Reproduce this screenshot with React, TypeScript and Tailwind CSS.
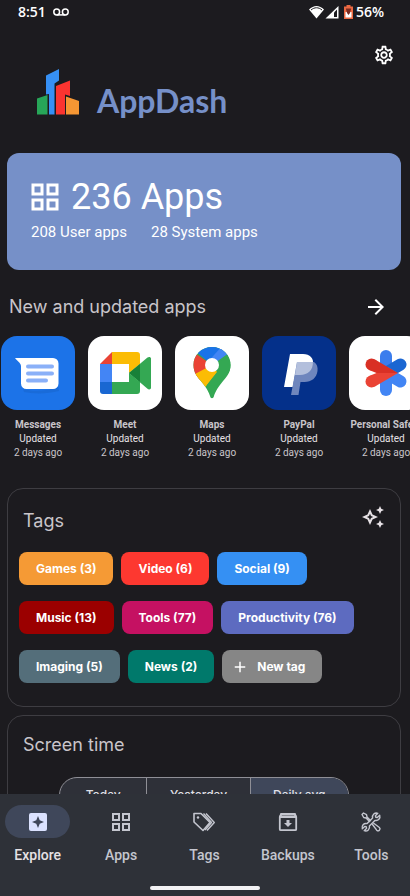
import type { ReactNode } from "react";
import {
  MdAdd,
  MdArrowForward,
  MdOutlineAutoAwesome,
  MdOutlineGridView,
  MdOutlineSettings,
} from "react-icons/md";

function AppDashLogo() {
  return (
    <svg viewBox="0 0 42 46" className="h-[46px] w-[42px]" aria-hidden="true">
      <path d="M0 29.5 10.500 26v19.500H0z" fill="#27a658" />
      <path d="M9 6.500 22 0v11.500l-4.500 3V45.500H12V25l-3 .5z" fill="#3690f5" />
      <path d="M19 17 33 11.500V27l-5-1.500v20h-9z" fill="#fb3430" />
      <path d="M29 27.500 42 32v13.500H29z" fill="#f59633" />
    </svg>
  );
}

function MessagesIcon() {
  return (
    <svg viewBox="0 0 74 74" className="size-full" aria-hidden="true">
      <rect width="74" height="74" fill="#1c73e8" />
      <path d="M22 53c10 3 25 2 35-2l1 4c-11 3-26 3-35 1z" fill="#1765cf" opacity=".6" />
      <path d="M15 22h37a5.500 5.500 0 0 1 5.500 5.500v20A5.500 5.500 0 0 1 52 53H25.500a5.500 5.500 0 0 1-5.500-5.500V31c0-2-.5-3-1.500-4.200l-4-4C14 22.300 14.200 22 15 22z" fill="#fff" />
      <path d="M27 30.500h24M27 37.500h24M27 44.500h18" stroke="#8ab0f8" strokeWidth="4" strokeLinecap="round" />
    </svg>
  );
}

function MeetIcon() {
  return (
    <svg viewBox="0 0 74 74" className="size-full" aria-hidden="true">
      <rect width="74" height="74" fill="#fff" />
      <path d="M12 28 24 16v12z" fill="#e94335" />
      <path d="M12 28h12v18H12z" fill="#4385f5" />
      <path d="M12 46h12v12h-9a3 3 0 0 1-3-3z" fill="#1967d2" />
      <path d="M24 16h25a3 3 0 0 1 3 3v9L41 37v-9H24z" fill="#fbbc05" />
      <path d="M24 46h17v-9l11 9v9a3 3 0 0 1-3 3H24z" fill="#34a853" />
      <path d="m41 37 18.500-15.500c1.500-1.200 3.500-.5 3.500 1.200v29c0 1.700-2 2.300-3.500 1.100z" fill="#34a853" />
      <path d="M41 37 52 28v18z" fill="#188038" />
    </svg>
  );
}

function MapsIcon() {
  return (
    <svg viewBox="0 0 74 74" className="size-full" aria-hidden="true">
      <defs>
        <clipPath id="pin">
          <path d="M37 11c10.500 0 18.500 8 18.500 18 0 8-4 12-9 18-5 6-6.500 10-7.500 13-.7 3-3.300 3-4 0-1-3-2.500-7-7.500-13-5-6-9-10-9-18 0-10 8-18 18.500-18z" />
        </clipPath>
      </defs>
      <rect width="74" height="74" fill="#fff" />
      <g clipPath="url(#pin)">
        <rect width="74" height="74" fill="#34a853" />
        <path d="m10 10 27 19-17 20-10-12z" fill="#ea4335" />
        <path d="m18 12 19-8 13 5-13 20-14.500-12z" fill="#1a73e8" />
        <path d="m48 9 12 8-23 12-6-1z" fill="#4285f4" />
        <path d="m37 29 17-12 6 6-22 18z" fill="#34a853" />
        <path d="m20 38 17-9 12-1-22 27-12-10z" fill="#fbbc04" />
        <path d="m37 29 15-7 8 8-20 20-8-1 10-13z" fill="#34a853" />
      </g>
      <circle cx="37" cy="29" r="7" fill="#fff" />
    </svg>
  );
}

function PayPalIcon() {
  return (
    <svg viewBox="0 0 74 74" className="size-full" aria-hidden="true">
      <rect width="74" height="74" fill="#04308a" />
      <path d="M28 18h13c7 0 11 4 10 11-1 7-6 10-13 10h-5l-2.200 12H22z" fill="#fff" />
      <path d="M35 26h17c3 2 4 5 3.500 9-1 7-6 11-13 11h-4L36.500 59H29z" fill="#6f86bd" />
      <path d="M35 26h15.900c.3 8-5 13-12.900 13h-5z" fill="#b3bfdc" />
    </svg>
  );
}

function SafetyIcon() {
  return (
    <svg viewBox="0 0 74 74" className="size-full" aria-hidden="true">
      <rect width="74" height="74" fill="#fff" />
      <g strokeWidth="12" strokeLinecap="round" fill="none">
        <path d="M37 20v17" stroke="#3b7ded" />
        <path d="M37 37v17" stroke="#4285f4" />
        <path d="m37 37 14.500-8.500" stroke="#1b66d2" />
        <path d="m37 37 14.500 8.500" stroke="#4285f4" />
      </g>
      <circle cx="22.500" cy="28.500" r="6" fill="#d93025" />
      <path d="M25.500 23.300 49 37H27.500l-8-3.300z" fill="#d93025" />
      <circle cx="22.500" cy="45.500" r="6" fill="#ea4335" />
      <path d="M25.500 50.700 49 37H27.500l-8 3.300z" fill="#ea4335" />
    </svg>
  );
}

function ExploreIcon() {
  return (
    <svg viewBox="0 0 24 24" className="size-6" aria-hidden="true">
      <rect x="3" y="3" width="18" height="18" rx="2" fill="#dbe2ff" />
      <path d="m12 6 1.700 4.300L18 12l-4.300 1.700L12 18l-1.700-4.300L6 12l4.300-1.700z" fill="#3f475a" />
    </svg>
  );
}

function TagsIcon() {
  return (
    <svg viewBox="0 0 24 24" className="size-6" fill="none" stroke="currentColor" strokeWidth="1.600" strokeLinejoin="round" aria-hidden="true">
      <path d="M2 3.500h7l9 9-7 8-9-8.500z" />
      <path d="m11.500 3.500 8 9-6.500 7.500M14 3.500l8.300 9-7.300 8" strokeWidth="1.400" />
      <circle cx="6" cy="7.500" r="1.200" fill="currentColor" stroke="none" />
    </svg>
  );
}

function BackupsIcon() {
  return (
    <svg viewBox="0 0 24 24" className="size-6" fill="none" stroke="currentColor" strokeWidth="1.800" strokeLinejoin="round" aria-hidden="true">
      <path d="M5.500 3.800h13l1.700 3.200v12.200a1 1 0 0 1-1 1H4.800a1 1 0 0 1-1-1V7z" />
      <path d="M5 4h14l1 3H4z" fill="currentColor" fillOpacity=".6" />
      <path d="M10.500 10h3v3H16l-4 4-4-4h2.500z" fill="currentColor" stroke="none" />
    </svg>
  );
}

function ToolsIcon() {
  return (
    <svg viewBox="0 0 24 24" className="size-6" fill="none" stroke="currentColor" strokeWidth="1.400" strokeLinejoin="round" strokeLinecap="round" aria-hidden="true">
      <path d="M3 4.500 4.500 3l3 1.700.5 2.300 3.500 3.500M3 4.500l1.700 3L7 8l3.500 3.500" />
      <path d="m13.500 14.500 4.200 5.700a1.900 1.900 0 0 0 2.700-2.700l-5.700-4.200" />
      <path d="m20.700 5.200-2.400 2.400-1.500-.4-.4-1.500 2.400-2.400c-3-1-6 1.500-5.200 4.800l-5.500 5.500c-3.300-.8-5.800 2-4.800 5.200l2.400-2.400 1.500.4.400 1.500-2.400 2.400c3.200 1 6-1.500 5.200-4.800l5.500-5.500c3.300.8 5.800-2 4.800-5.200z" />
    </svg>
  );
}

function StatusBar() {
  return (
    <div className="flex h-6 items-center justify-between pr-[26px] pl-[18px] font-['Open_Sans',sans-serif] text-sm font-semibold text-white">
      <div className="flex items-center gap-[7px]">
        <span>8:51</span>
        <svg viewBox="0 0 16 8" className="h-2 w-4" fill="none" stroke="currentColor" strokeWidth="1.500" aria-hidden="true">
          <circle cx="3.700" cy="4" r="2.900" />
          <circle cx="12.300" cy="4" r="2.900" />
          <path d="M3.700 6.900h8.600" />
        </svg>
      </div>
      <div className="flex items-center gap-[3px]">
        <svg viewBox="0 0 30 14" className="h-3.5 w-[30px]" aria-hidden="true">
          <path d="M0 4.500C4.500-.3 10.500-.3 15 4.500L7.500 13.500z" fill="#fff" />
          <path d="M2 5c3.500-3 7.500-3 11 0" stroke="#1c1b1f" strokeWidth="1" fill="none" />
          <path d="M16.500 13.500 29.500 1v12.500z" fill="#fff" />
          <path d="M25 7.500 28 4.500v7.500h-3z" fill="#1c1b1f" />
        </svg>
        <svg viewBox="0 0 9 14" className="ml-0.5 h-3.5 w-[9px]" aria-hidden="true">
          <path d="M2.500 0h4v1.500H9V14H0V1.500h2.500z" fill="#ec6a43" />
          <path d="M1.500 7h6v5.500h-6z" fill="#fff" />
          <path d="M1.800 3.500h5.400L6 8l-1.500 2L3 8z" fill="#7b2b20" />
        </svg>
        <span>56%</span>
      </div>
    </div>
  );
}

const recentApps: { name: string; icon: ReactNode }[] = [
  { name: "Messages", icon: <MessagesIcon /> },
  { name: "Meet", icon: <MeetIcon /> },
  { name: "Maps", icon: <MapsIcon /> },
  { name: "PayPal", icon: <PayPalIcon /> },
  { name: "Personal Safety", icon: <SafetyIcon /> },
];

const tags = [
  { label: "Games (3)", color: "bg-[#f59a35]" },
  { label: "Video (6)", color: "bg-[#fd3830]" },
  { label: "Social (9)", color: "bg-[#3590f3]" },
  { label: "Music (13)", color: "bg-[#9b0000]" },
  { label: "Tools (77)", color: "bg-[#c51162]" },
  { label: "Productivity (76)", color: "bg-[#5d6bc0]" },
  { label: "Imaging (5)", color: "bg-[#546e7a]" },
  { label: "News (2)", color: "bg-[#00796b]" },
];

const tabs: { label: string; icon: ReactNode }[] = [
  { label: "Explore", icon: <ExploreIcon /> },
  { label: "Apps", icon: <MdOutlineGridView className="size-6" /> },
  { label: "Tags", icon: <TagsIcon /> },
  { label: "Backups", icon: <BackupsIcon /> },
  { label: "Tools", icon: <ToolsIcon /> },
];

const chip = "flex h-[33px] items-center rounded-lg px-[17px] text-xs font-bold text-white";

export default function App() {
  return (
    <div className="flex h-screen flex-col overflow-hidden bg-[#1c1b1f] font-[Roboto,sans-serif] text-[#c9c5ca]">
      <StatusBar />

      <main className="min-h-0 flex-1 overflow-y-auto [scrollbar-width:none]">
        <header className="relative flex items-end gap-[18px] px-[37px] pt-[45px]">
          <AppDashLogo />
          <h1 className="font-[Lato,sans-serif] text-[32px] leading-7 font-bold text-[#7690c8]">AppDash</h1>
          <button type="button" aria-label="Settings" className="absolute top-5 right-[15px] text-white">
            <MdOutlineSettings className="size-[22px]" />
          </button>
        </header>

        <section className="mr-[9px] ml-[7px] mt-[38px] rounded-xl bg-[#7690c8] px-6 pt-6 pb-7 text-white">
          <h2 className="flex items-center gap-2 text-4xl leading-10">
            <MdOutlineGridView className="-ml-1 size-9" />
            236 Apps
          </h2>
          <p className="mt-[5px] flex gap-6 text-[15px] leading-5">
            <span>208 User apps</span>
            <span>28 System apps</span>
          </p>
        </section>

        <section className="mt-[22px]">
          <div className="flex items-center justify-between pr-[22px] pl-[9px]">
            <h2 className="font-[Inter,sans-serif] text-lg leading-[30px]">New and updated apps</h2>
            <button type="button" aria-label="See all new and updated apps" className="text-white">
              <MdArrowForward className="size-6" />
            </button>
          </div>
          <ul className="mt-3.5 flex gap-[13px] overflow-x-auto pl-px [scrollbar-width:none]">
            {recentApps.map((app) => (
              <li key={app.name} className="flex w-[74px] shrink-0 flex-col items-center text-[10px] leading-3.5 whitespace-nowrap">
                <div className="mb-2 size-[74px] overflow-hidden rounded-2xl">{app.icon}</div>
                <span className="font-bold">{app.name}</span>
                <span className="text-[#e6e1e5]">Updated</span>
                <span>2 days ago</span>
              </li>
            ))}
          </ul>
        </section>

        <section className="mr-[9px] ml-[7px] mt-7 rounded-2xl border border-[#3e3d42] px-[11px] pt-4 pb-[23px] font-[Inter,sans-serif]">
          <div className="flex items-center justify-between px-1">
            <h2 className="text-lg leading-8">Tags</h2>
            <button type="button" aria-label="Suggest tags" className="mb-2 text-[#e6e1e5]">
              <MdOutlineAutoAwesome className="size-6" />
            </button>
          </div>
          <div className="mt-[15px] flex flex-wrap gap-x-2 gap-y-4">
            {tags.map((tag) => (
              <button key={tag.label} type="button" className={`${chip} ${tag.color}`}>
                {tag.label}
              </button>
            ))}
            <button type="button" className={`${chip} gap-2 bg-[#868686]`}>
              <MdAdd className="-ml-2 size-[18px]" />
              New tag
            </button>
          </div>
        </section>

        <section className="mr-[9px] ml-[7px] mt-2 rounded-2xl border border-[#3e3d42] px-[11px] pt-[13px] pb-6 font-[Inter,sans-serif]">
          <h2 className="pl-1 text-lg leading-8">Screen time</h2>
          <div className="mx-10 mt-4 grid h-9 grid-cols-[88fr_104fr_98fr] divide-x divide-[#8f8f96] overflow-hidden rounded-full border border-[#8f8f96] bg-[#2e3038] text-xs font-medium text-[#e0e0e6]">
            <button type="button">Today</button>
            <button type="button">Yesterday</button>
            <button type="button" className="bg-[#3f475a]">Daily avg</button>
          </div>
        </section>
      </main>

      <footer className="bg-[#2e3138]">
        <nav className="mr-px grid grid-cols-5 gap-2 pt-[11px]">
          {tabs.map((tab, i) => (
            <a
              key={tab.label}
              href={`#${tab.label.toLowerCase()}`}
              className={`flex flex-col items-center text-sm leading-5 font-medium ${i === 0 ? "text-[#e6e1e5]" : "text-[#c4c6cf]"}`}
            >
              <span className={`flex h-[33px] w-[65px] items-center justify-center rounded-full ${i === 0 ? "bg-[#3f475a]" : ""}`}>
                {tab.icon}
              </span>
              <span className="mt-[7px]">{tab.label}</span>
            </a>
          ))}
        </nav>
        <div className="mx-auto mt-[21px] mb-1.5 h-1 w-[110px] rounded-full bg-[#f2f2f4]" />
      </footer>
    </div>
  );
}
